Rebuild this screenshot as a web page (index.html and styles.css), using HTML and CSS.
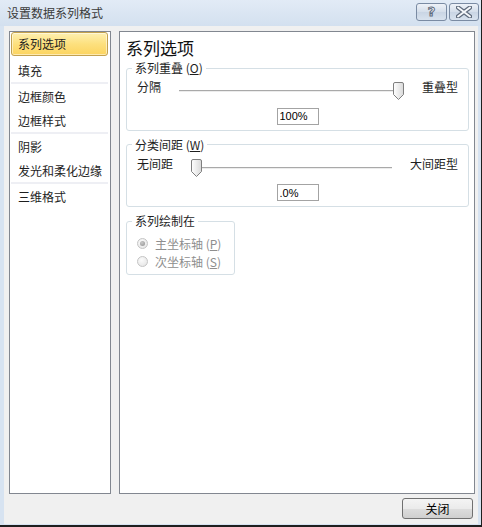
FILE: index.html
```html
<!DOCTYPE html>
<html lang="zh-CN">
<head>
  <meta charset="UTF-8">
  <meta name="viewport" content="width=device-width, initial-scale=1.0">
  <title>设置数据系列格式</title>
  <link rel="stylesheet" href="styles.css">
</head>
<body>
  <div class="window">
    <div class="titlebar">
      <span class="title">设置数据系列格式</span>
      <div class="caption-buttons">
        <button class="cap-btn help">?</button>
        <button class="cap-btn close-x">
          <svg width="16" height="12" viewBox="0 0 16 12">
            <path d="M2 1.5 L14 10.5 M14 1.5 L2 10.5" stroke="#5f6b7c" stroke-width="4.4" stroke-linecap="round"/>
            <path d="M2 1.5 L14 10.5 M14 1.5 L2 10.5" stroke="#f6f8fb" stroke-width="2" stroke-linecap="round"/>
          </svg>
        </button>
      </div>
    </div>

    <div class="client">
      <div class="panels">
        <ul class="nav">
          <li class="active">系列选项</li>
          <li>填充</li>
          <li class="sep"></li>
          <li>边框颜色</li>
          <li>边框样式</li>
          <li class="sep"></li>
          <li>阴影</li>
          <li>发光和柔化边缘</li>
          <li class="sep"></li>
          <li>三维格式</li>
        </ul>

        <div class="pane">
          <h2>系列选项</h2>

          <fieldset class="group">
            <legend>系列重叠 (<u>O</u>)</legend>
            <div class="slider-row">
              <span>分隔</span>
              <div class="slider at-end">
                <div class="track"></div>
                <svg class="thumb" width="11" height="18" viewBox="0 0 11 18">
                  <defs>
                    <linearGradient id="thumbA" x1="0" y1="0" x2="1" y2="0">
                      <stop offset="0" stop-color="#ffffff"/>
                      <stop offset="1" stop-color="#d9d9d9"/>
                    </linearGradient>
                  </defs>
                  <path d="M2 0.5 H9 A1.5 1.5 0 0 1 10.5 2 V12.5 L5.5 17.5 L0.5 12.5 V2 A1.5 1.5 0 0 1 2 0.5 Z" fill="url(#thumbA)" stroke="#7f7f7f"/>
                </svg>
              </div>
              <span>重叠型</span>
            </div>
            <div class="value"><input type="text" value="100%"></div>
          </fieldset>

          <fieldset class="group">
            <legend>分类间距 (<u>W</u>)</legend>
            <div class="slider-row">
              <span>无间距</span>
              <div class="slider at-start">
                <div class="track"></div>
                <svg class="thumb" width="11" height="18" viewBox="0 0 11 18">
                  <defs>
                    <linearGradient id="thumbB" x1="0" y1="0" x2="1" y2="0">
                      <stop offset="0" stop-color="#ffffff"/>
                      <stop offset="1" stop-color="#d9d9d9"/>
                    </linearGradient>
                  </defs>
                  <path d="M2 0.5 H9 A1.5 1.5 0 0 1 10.5 2 V12.5 L5.5 17.5 L0.5 12.5 V2 A1.5 1.5 0 0 1 2 0.5 Z" fill="url(#thumbB)" stroke="#7f7f7f"/>
                </svg>
              </div>
              <span>大间距型</span>
            </div>
            <div class="value"><input type="text" value=".0%"></div>
          </fieldset>

          <fieldset class="group plot-on">
            <legend>系列绘制在</legend>
            <div class="radio-row"><span class="radio checked"></span>主坐标轴 (<u>P</u>)</div>
            <div class="radio-row"><span class="radio"></span>次坐标轴 (<u>S</u>)</div>
          </fieldset>
        </div>
      </div>

      <div class="footer">
        <button class="btn-close">关闭</button>
      </div>
    </div>
  </div>
</body>
</html>
```

FILE: styles.css
```css
body {
  margin: 0;
  padding: 0;
  font-family: "Noto Sans CJK SC", "Noto Sans", sans-serif;
  font-size: 12px;
  color: #1e1e1e;
  background-color: #fff;
}

.window {
  width: 482px;
  height: 527px;
  box-sizing: border-box;
  border-right: 1px solid #1f1f1f;
  border-bottom: 2px solid #1f1f1f;
  background-color: #d7e3f1;
  display: flex;
  flex-direction: column;
}

/* title bar */
.titlebar {
  height: 26px;
  flex-shrink: 0;
  display: flex;
  align-items: flex-start;
  padding: 3px 2px 0 7px;
  box-sizing: border-box;
  background: linear-gradient(#e2ebf6, #d3e0ef);
}

.title {
  line-height: 20px;
  color: #3a3a3a;
}

.caption-buttons {
  margin-left: auto;
  display: flex;
  gap: 2px;
}

.cap-btn {
  width: 31px;
  height: 18px;
  padding: 0;
  border: 1px solid #7a8ba3;
  border-radius: 3px;
  background: linear-gradient(#eef2f8, #d4deea 50%, #c9d5e4 51%, #d8e2ee);
  display: flex;
  align-items: center;
  justify-content: center;
}

.close-x {
  width: 30px;
}

.help {
  font-family: "DejaVu Sans", sans-serif;
  font-size: 13px;
  font-weight: bold;
  line-height: 16px;
  color: #f6f8fb;
  -webkit-text-stroke: 1px #5f6b7c;
}

/* client area */
.client {
  flex: 1;
  margin: 0 3px 1px 4px;
  background-color: #f0f0f0;
  padding: 5px 3px 0 5px;
  display: flex;
  flex-direction: column;
}

.panels {
  height: 463px;
  display: flex;
  gap: 8px;
}

.nav {
  width: 102px;
  box-sizing: border-box;
  margin: 0;
  padding: 0 2px 0 1px;
  list-style: none;
  background-color: #fff;
  border: 1px solid #828790;
}

.nav li {
  height: 24px;
  line-height: 25px;
  padding-left: 7px;
  white-space: nowrap;
}

.nav li.active {
  box-sizing: border-box;
  margin-bottom: 2px;
  line-height: 22px;
  padding-left: 6px;
  border: 1px solid #c3a14e;
  border-radius: 3px;
  background: linear-gradient(#fef0b0, #fde07e 50%, #fcd45f);
  box-shadow: inset 0 0 0 1px rgba(255, 255, 255, 0.5);
}

.nav li.sep {
  height: 2px;
  padding: 0;
  background-color: #eeeff4;
}

.pane {
  flex: 1;
  background-color: #fff;
  border: 1px solid #828790;
  padding: 0 5px 0 6px;
}

.pane h2 {
  margin: 5px 0 0 0;
  font-size: 17px;
  font-weight: normal;
  line-height: 22px;
  color: #111;
}

/* group boxes */
.group {
  margin: 1px 0 0 0;
  padding: 0 10px 5px 10px;
  border: 1px solid #d5dfe5;
  border-radius: 3px;
}

.group + .group {
  margin-top: 6px;
}

.group legend {
  margin-left: -5px;
  padding: 0 3px;
  line-height: 16px;
  color: #1e1e1e;
}

u {
  text-decoration: underline;
}

.slider-row {
  display: flex;
  height: 21px;
  line-height: 21px;
}

.slider {
  flex: 1;
  position: relative;
  margin: 0 18px;
}

.track {
  position: absolute;
  top: 14px;
  height: 1px;
  background-color: #a9a9a9;
  border-bottom: 1px solid #ececec;
}

.at-end .track {
  left: 0;
  right: 5px;
}

.at-start .track {
  left: 5px;
  right: 0;
}

.thumb {
  position: absolute;
  top: 6px;
}

.at-end .thumb {
  right: 0;
}

.at-start .thumb {
  left: 0;
}

.value {
  margin-top: 9px;
  text-align: center;
}

.value input {
  width: 42px;
  height: 17px;
  box-sizing: border-box;
  padding: 0 2px;
  border: 1px solid #a3a3a3;
  font-family: "Liberation Sans", Arial, sans-serif;
  font-size: 11px;
  color: #000;
  outline: none;
}

.plot-on {
  width: 109px;
  box-sizing: border-box;
  padding-top: 5px;
  padding-bottom: 4px;
}

.radio-row {
  display: flex;
  align-items: center;
  height: 18px;
  color: #8e8e8e;
  white-space: nowrap;
}

.radio {
  width: 11px;
  height: 11px;
  box-sizing: border-box;
  margin-right: 7px;
  border: 1px solid #c4c4c4;
  border-radius: 50%;
  background: radial-gradient(circle at 40% 35%, #fbfbfb, #e2e2e2);
  display: flex;
  align-items: center;
  justify-content: center;
}

.radio.checked::after {
  content: "";
  width: 5px;
  height: 5px;
  border-radius: 50%;
  background: radial-gradient(circle at 40% 35%, #c9c9c9, #8f8f8f);
}

/* bottom button */
.footer {
  display: flex;
  justify-content: flex-end;
  padding: 4px 2px 0 0;
}

.btn-close {
  width: 71px;
  height: 21px;
  padding: 0;
  border: 1px solid #707070;
  border-radius: 3px;
  background: linear-gradient(#f4f4f4, #ebebeb 50%, #dddddd 51%, #cfcfcf);
  font-family: "Noto Sans CJK SC", sans-serif;
  font-size: 12px;
  color: #000;
}
```
